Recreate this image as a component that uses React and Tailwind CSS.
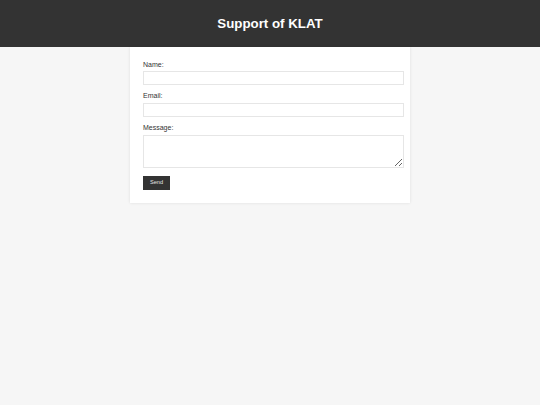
export default function App() {
  return (
    <div className="min-h-[405px] bg-[#f6f6f6]" style={{ fontFamily: '"Liberation Sans", Arial, sans-serif' }}>
      <header className="h-[47px] bg-[#333333] flex items-center justify-center">
        <h1 className="text-white font-bold text-[13.3px] leading-none">Support of KLAT</h1>
      </header>
      <div className="w-[280px] mx-auto bg-white pt-[14px] pb-[13px] pl-[13px] shadow-[0_0_3px_rgba(0,0,0,0.1)]">
        <form className="flex flex-col">
          <label className="text-[7px] leading-[8px] text-[#333] mb-[2px]">Name:</label>
          <input className="w-[261px] h-[14px] border border-[#e6e6e6] bg-white mb-[7px] outline-none" />
          <label className="text-[7px] leading-[8px] text-[#333] mb-[3px]">Email:</label>
          <input className="w-[261px] h-[14px] border border-[#e6e6e6] bg-white mb-[7px] outline-none" />
          <label className="text-[7px] leading-[8px] text-[#333] mb-[3px]">Message:</label>
          <textarea className="w-[261px] h-[33px] border border-[#e6e6e6] bg-white mb-[8px] outline-none block" />
          <button type="button" className="w-[27px] h-[14px] bg-[#333333] text-[#e6e6e6] text-[5.6px] leading-none flex items-center justify-center">Send</button>
        </form>
      </div>
    </div>
  );
}
